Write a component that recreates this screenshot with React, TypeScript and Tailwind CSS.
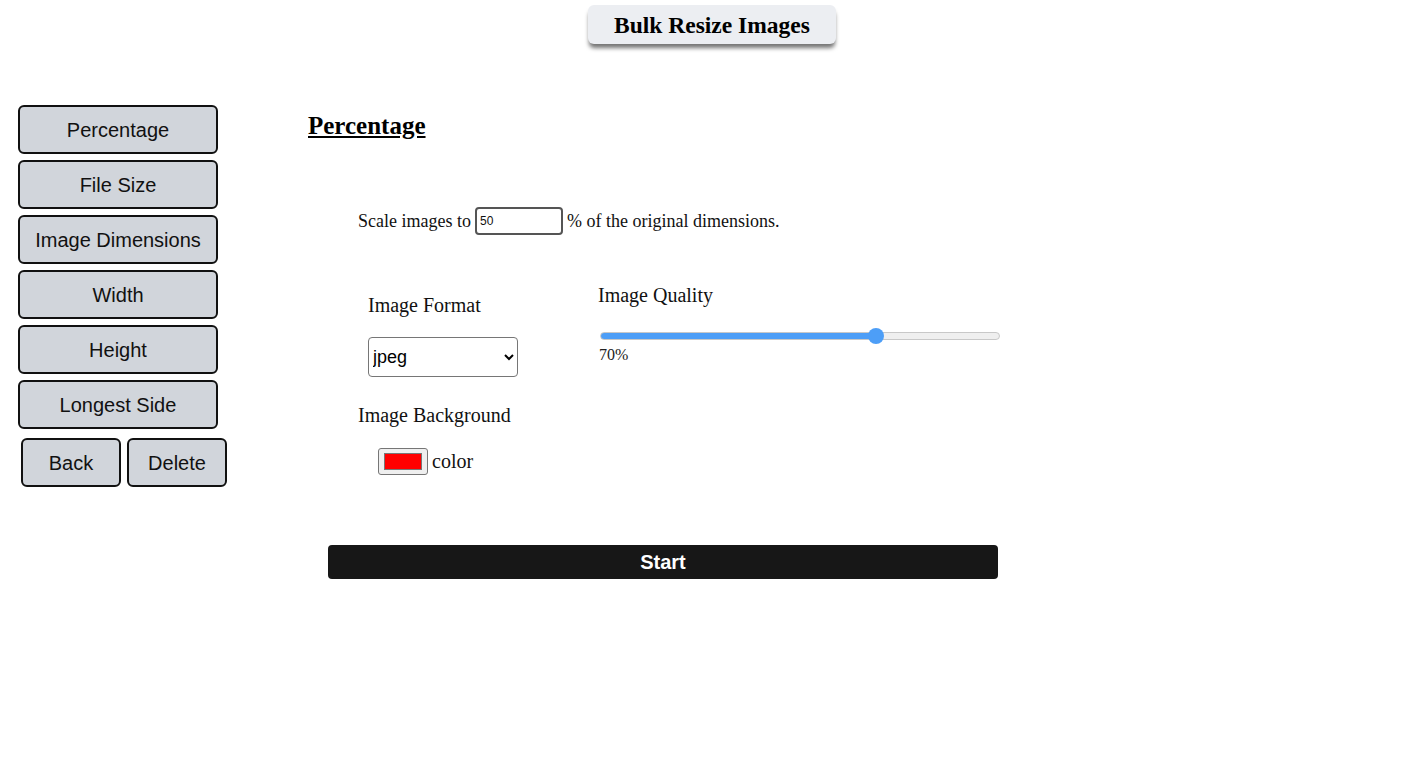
import React from "react";

const serif = { fontFamily: '"Liberation Serif", "Times New Roman", serif' };

export default function App() {
  const side = ["Percentage", "File Size", "Image Dimensions", "Width", "Height", "Longest Side"];
  return (
    <div className="w-[1420px] h-[779px] bg-white text-black" style={serif}>
      <div className="flex justify-center pt-[5px] pl-[4px]">
        <div className="w-[248px] h-[39px] bg-[#eceef2] rounded-md shadow-[0_5px_4px_-1px_rgba(0,0,0,0.55)] flex items-center justify-center text-[23.5px] leading-[28px] font-bold">
          Bulk Resize Images
        </div>
      </div>
      <div className="flex pt-[61px]">
        <div className="w-[290px] pl-[18px] flex flex-col gap-[6px] font-['Liberation_Sans',Arial,sans-serif]">
          {side.map((s) => (
            <button key={s} className="w-[200px] h-[49px] bg-[#d1d5db] border-2 border-[#111] rounded-md text-[20px] text-[#111]">
              {s}
            </button>
          ))}
          <div className="flex gap-[6px] pl-[3px] pt-[3px]">
            <button className="w-[100px] h-[49px] bg-[#d1d5db] border-2 border-[#111] rounded-md text-[20px] text-[#111]">Back</button>
            <button className="w-[100px] h-[49px] bg-[#d1d5db] border-2 border-[#111] rounded-md text-[20px] text-[#111]">Delete</button>
          </div>
        </div>
        <div className="flex flex-col">
          <h1 className="ml-[18px] mt-[7px] text-[25px] font-bold underline leading-[28px]">Percentage</h1>
          <div className="ml-[68px] mt-[67px] flex items-center text-[18px] text-[#111]">
            <span>Scale images to</span>
            <input
              defaultValue="50"
              className="mx-[4px] w-[88px] h-[28px] border-2 border-[#555] rounded-[4px] px-[3px] text-[12px] font-['Liberation_Sans',Arial,sans-serif] outline-none"
            />
            <span>% of the original dimensions.</span>
          </div>
          <div className="flex mt-[49px]">
            <div className="ml-[78px] w-[230px] flex flex-col">
              <div className="mt-[10px] text-[20px] leading-[22px] text-[#111]">Image Format</div>
              <select className="mt-[21px] w-[150px] h-[40px] border border-[#767676] rounded-[4px] text-[18px] font-['Liberation_Sans',Arial,sans-serif] bg-white pl-0 pr-[2px]">
                <option>jpeg</option>
                <option>png</option>
                <option>webp</option>
              </select>
            </div>
            <div className="flex flex-col">
              <div className="text-[20px] leading-[22px] text-[#111]">Image Quality</div>
              <input
                type="range"
                min={0}
                max={100}
                defaultValue={70}
                className="mt-[26px] ml-[2px] w-[400px] h-[8px] appearance-none rounded-full border border-[#c8c8c8] bg-[linear-gradient(to_right,#4d9ef7_70%,#efefef_70%)] outline-none [&::-webkit-slider-thumb]:appearance-none [&::-webkit-slider-thumb]:w-[16px] [&::-webkit-slider-thumb]:h-[16px] [&::-webkit-slider-thumb]:rounded-full [&::-webkit-slider-thumb]:bg-[#4d9ef7]"
              />
              <div className="mt-[6px] text-[16px] leading-[18px] text-[#222] ml-[1px]">70%</div>
            </div>
          </div>
          <div className="ml-[68px] mt-[27px] text-[20px] leading-[22px] text-[#111]">Image Background</div>
          <div className="ml-[88px] mt-[20px] flex items-center gap-[4px]">
            <input
              type="color"
              defaultValue="#ff0000"
              className="w-[50px] h-[27px] bg-[#efefef] border border-[#767676] rounded-[3px] px-[2px] py-[1px] [&::-webkit-color-swatch-wrapper]:p-[3px] [&::-webkit-color-swatch]:border [&::-webkit-color-swatch]:border-[#777]"
            />
            <span className="text-[20px] text-[#111]">color</span>
          </div>
          <button className="ml-[38px] mt-[69px] w-[670px] h-[34px] bg-[#171717] rounded-[4px] text-white text-[20px] font-bold font-['Liberation_Sans',Arial,sans-serif]">
            Start
          </button>
        </div>
      </div>
    </div>
  );
}
